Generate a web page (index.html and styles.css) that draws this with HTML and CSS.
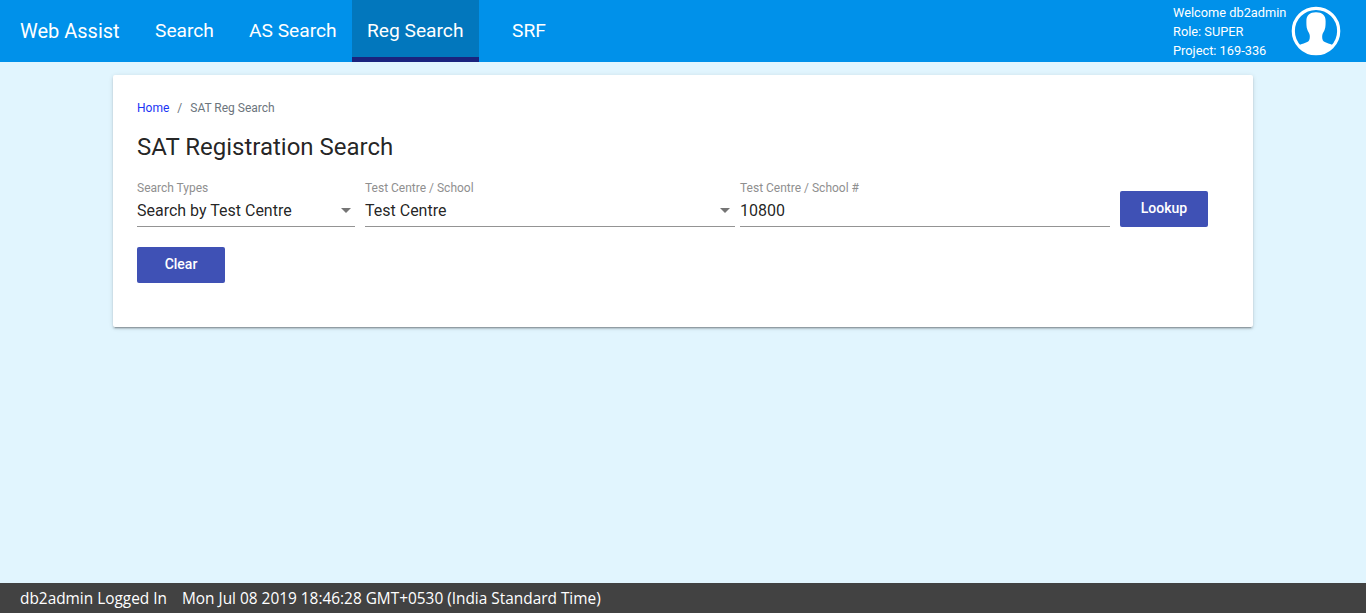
FILE: index.html
```html
<!DOCTYPE html>
<html lang="en">
<head>
<meta charset="utf-8">
<title>SAT Registration Search</title>
<link rel="stylesheet" href="styles.css">
</head>
<body>
<header class="topbar">
  <span class="brand">Web Assist</span>
  <nav class="nav">
    <a class="nav-item nav-search">Search</a>
    <a class="nav-item nav-as">AS Search</a>
    <a class="nav-item nav-reg active">Reg Search</a>
    <a class="nav-item nav-srf">SRF</a>
  </nav>
  <div class="user">
    <div>Welcome db2admin</div>
    <div>Role: SUPER</div>
    <div>Project: 169-336</div>
  </div>
  <svg class="avatar" viewBox="0 0 50 50" aria-label="User">
    <circle cx="25" cy="25" r="22.7" fill="none" stroke="#fff" stroke-width="3.2"/>
    <path fill="#fff" d="M25 6.200C19 6.200 15.200 9.500 15.400 15C15.400 17 15.300 21 16.300 23.500C16.900 25.500 18.300 27 18.700 29C19 31.500 18.900 34 17.200 35.400C14.500 37.200 11 37.500 7.500 39.500C11.500 45.500 18 48.500 25 48.500C32 48.500 38.500 45.500 42.500 39.500C39 37.500 35.500 37.200 32.800 35.400C31.100 34 31 31.500 31.300 29C31.700 27 33.100 25.500 33.700 23.500C34.700 21 34.600 17 34.600 15C34.800 9.500 31 6.200 25 6.200Z"/>
  </svg>
</header>
<main class="content">
  <section class="card">
    <div class="breadcrumb"><a class="home">Home</a><span class="separator">/</span><span>SAT Reg Search</span></div>
    <h1 class="title">SAT Registration Search</h1>
    <form class="fields">
      <div class="field field-type">
        <label class="label">Search Types</label>
        <div class="value">Search by Test Centre<span class="arrow"></span></div>
      </div>
      <div class="field field-centre">
        <label class="label">Test Centre / School</label>
        <div class="value">Test Centre<span class="arrow"></span></div>
      </div>
      <div class="field field-number">
        <label class="label">Test Centre / School #</label>
        <div class="value">10800</div>
      </div>
      <button class="button lookup" type="button">Lookup</button>
    </form>
    <button class="button clear" type="button">Clear</button>
  </section>
</main>
<footer class="footer"><span class="status">db2admin Logged In</span><span class="time">Mon Jul 08 2019 18:46:28 GMT+0530 (India Standard Time)</span></footer>
</body>
</html>
```
FILE: styles.css
```css
* { box-sizing: border-box; }
body {
  margin: 0;
  height: 613px;
  display: flex;
  flex-direction: column;
  background: #e1f5fe;
  font-family: Roboto, sans-serif;
  color: rgba(0, 0, 0, .87);
  overflow: hidden;
}
.topbar {
  height: 62px;
  flex: none;
  display: flex;
  align-items: stretch;
  background: #0091ea;
  color: #fff;
  padding-right: 25px;
}
.brand {
  width: 140px;
  padding-left: 20px;
  font-size: 20px;
  line-height: 62px;
  white-space: nowrap;
}
.nav { display: flex; flex: 1; height: 62px; }
.nav-item {
  padding: 0 15px;
  font-size: 19.2px;
  line-height: 62px;
  white-space: nowrap;
}
.nav-search { width: 94px; }
.nav-as { width: 118px; }
.nav-reg { width: 127px; }
.nav-srf { margin-left: 18px; }
.active { background: #0277bd; border-bottom: 5px solid #1a237e; }
.user {
  width: 118px;
  padding-top: 3px;
  font-size: 12.8px;
  line-height: 19px;
  white-space: nowrap;
}
.avatar { width: 50px; height: 50px; margin-top: 6px; flex: none; }
.content { flex: 1; padding: 13px 113px 0; }
.card {
  height: 252px;
  padding: 24px;
  border-radius: 2px;
  background: #fff;
  box-shadow: 0 3px 1px -2px rgba(0, 0, 0, .2), 0 2px 2px 0 rgba(0, 0, 0, .14), 0 1px 5px 0 rgba(0, 0, 0, .12);
}
.breadcrumb { display: flex; font-size: 12px; line-height: 18px; color: #6c757d; }
.home { color: #1a35f5; }
.separator { padding: 0 8px; }
.title { margin: 14px 0 0; font-size: 24px; line-height: 32px; font-weight: 400; }
.fields { display: flex; margin-top: 16px; height: 48px; }
.field { border-bottom: 1px solid #949494; height: 48px; }
.field-type { width: 218px; margin-right: 10px; }
.field-centre { width: 370px; margin-right: 5px; }
.field-number { width: 370px; margin-right: 10px; }
.label { display: block; font-size: 12px; line-height: 18px; color: #8f8f8f; }
.value {
  display: flex;
  justify-content: space-between;
  align-items: center;
  padding-right: 4px;
  font-size: 16px;
  line-height: 28px;
}
.arrow { margin-bottom: 2px; border: 5px solid transparent; border-top-color: #757575; border-bottom: 0; }
.field-centre .value { padding-right: 5px; }
.button {
  display: block;
  width: 88px;
  height: 36px;
  border: 0;
  border-radius: 2px;
  padding: 0 0 2px;
  background: #3f51b5;
  color: #fff;
  font: 500 14px/34px Roboto, sans-serif;
}
.lookup { margin-top: 12px; }
.clear { margin-top: 20px; }
.footer {
  flex: none;
  height: 30px;
  display: flex;
  padding-left: 20px;
  background: #424242;
  color: #fff;
  font: 15.4px/32px "Open Sans", sans-serif;
  white-space: nowrap;
}
.status { width: 162px; }
```
